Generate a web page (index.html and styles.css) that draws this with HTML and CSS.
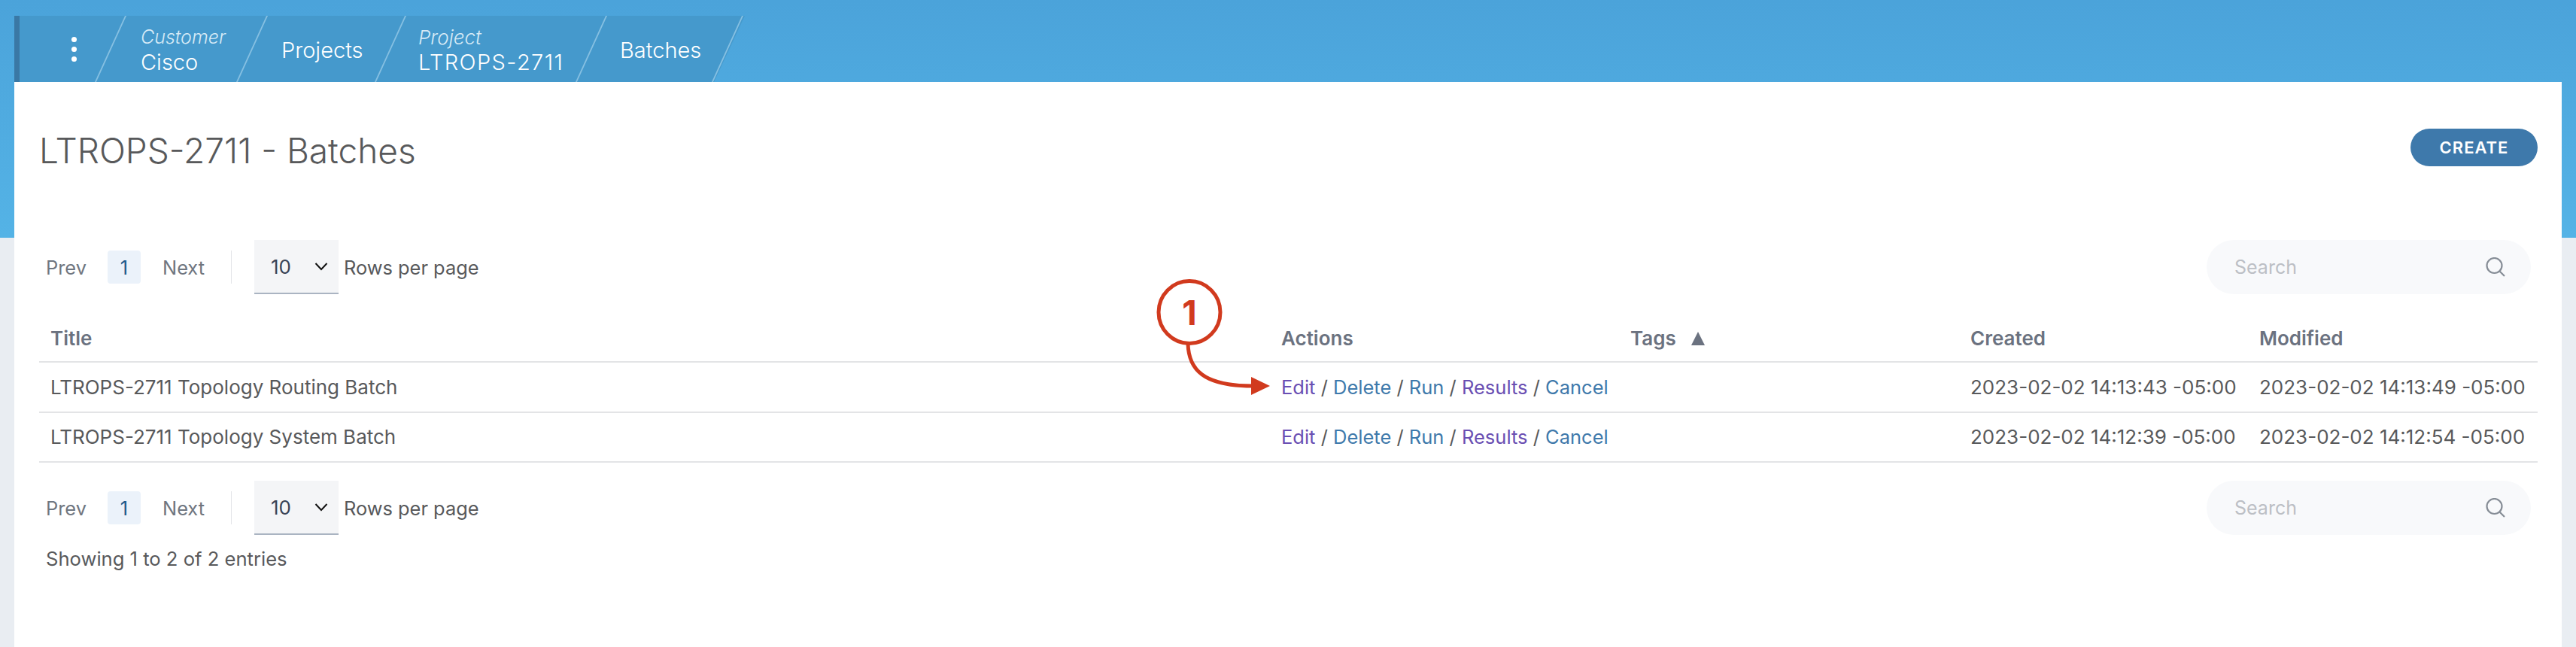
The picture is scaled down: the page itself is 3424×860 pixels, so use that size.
FILE: index.html
```html
<!DOCTYPE html>
<html lang="en">
<head>
<meta charset="utf-8">
<title>LTROPS-2711 - Batches</title>
<link rel="stylesheet" href="styles.css">
</head>
<body>
<div class="app">
  <nav class="crumbs">
    <div class="crumb crumb-menu"><span class="dot"></span><span class="dot"></span><span class="dot"></span></div>
    <div class="crumb crumb-customer"><span class="crumb-label">Customer</span><span class="crumb-name">Cisco</span></div>
    <div class="crumb crumb-projects"><span class="crumb-name">Projects</span></div>
    <div class="crumb crumb-project"><span class="crumb-label">Project</span><span class="crumb-name crumb-code">LTROPS-2711</span></div>
    <div class="crumb crumb-batches"><span class="crumb-name">Batches</span></div>
  </nav>
  <main class="panel">
    <header class="head">
      <h1 class="title">LTROPS-2711 - Batches</h1>
      <button class="create">CREATE</button>
    </header>
    <div class="pager">
      <div class="pager-left">
        <span class="page-link">Prev</span>
        <span class="page-num">1</span>
        <span class="page-link page-next">Next</span>
        <span class="page-divider"></span>
        <div class="rows-select"><span>10</span><svg class="chev" viewBox="0 0 18 12"><path d="M1.5 2 L9 10 L16.5 2"/></svg></div>
        <span class="rows-label">Rows per page</span>
      </div>
      <div class="search"><span class="search-text">Search</span><svg class="search-icon" viewBox="0 0 26 26"><circle cx="11.5" cy="11" r="10"/><path d="M18.5 18.5 L25 25"/></svg></div>
    </div>
    <div class="table-wrap">
      <table class="grid">
        <thead>
          <tr>
            <th class="col-title">Title</th>
            <th class="col-actions">Actions</th>
            <th class="col-tags">Tags<span class="sort"></span></th>
            <th class="col-created">Created</th>
            <th class="col-modified">Modified</th>
          </tr>
        </thead>
        <tbody>
          <tr>
            <td>LTROPS-2711 Topology Routing Batch</td>
            <td class="actions"><a class="visited">Edit</a> / <a>Delete</a> / <a>Run</a> / <a class="visited">Results</a> / <a>Cancel</a></td>
            <td></td>
            <td>2023-02-02 14:13:43 -05:00</td>
            <td>2023-02-02 14:13:49 -05:00</td>
          </tr>
          <tr>
            <td>LTROPS-2711 Topology System Batch</td>
            <td class="actions"><a class="visited">Edit</a> / <a>Delete</a> / <a>Run</a> / <a class="visited">Results</a> / <a>Cancel</a></td>
            <td></td>
            <td>2023-02-02 14:12:39 -05:00</td>
            <td>2023-02-02 14:12:54 -05:00</td>
          </tr>
        </tbody>
      </table>
      <div class="callout">
        <svg class="callout-art" viewBox="0 0 160 160">
          <ellipse cx="46" cy="46" rx="41" ry="41.5"/>
          <path d="M44 88 C45 122 64 144 130 144"/>
          <polygon class="callout-head" points="128,132 153,144 128,156"/>
        </svg>
        <span class="callout-num">1</span>
      </div>
    </div>
    <div class="pager pager-bottom">
      <div class="pager-left">
        <span class="page-link">Prev</span>
        <span class="page-num">1</span>
        <span class="page-link page-next">Next</span>
        <span class="page-divider"></span>
        <div class="rows-select"><span>10</span><svg class="chev" viewBox="0 0 18 12"><path d="M1.5 2 L9 10 L16.5 2"/></svg></div>
        <span class="rows-label">Rows per page</span>
      </div>
      <div class="search"><span class="search-text">Search</span><svg class="search-icon" viewBox="0 0 26 26"><circle cx="11.5" cy="11" r="10"/><path d="M18.5 18.5 L25 25"/></svg></div>
    </div>
    <p class="showing">Showing 1 to 2 of 2 entries</p>
  </main>
</div>
</body>
</html>
```
FILE: styles.css
```css
* { box-sizing: border-box; }
html, body { margin: 0; height: 100%; }
body {
  font-family: Inter, "Liberation Sans", sans-serif;
  background: linear-gradient(#4ba3da, #54b3e6) top / 100% 316px no-repeat, #e9edf2;
  overflow: hidden;
}
.app {
  height: 860px;
  padding: 21px 19px 0;
  display: flex;
  flex-direction: column;
}
.crumbs {
  display: flex;
  width: 971px;
  height: 88px;
  background: #4599cc;
  border-left: 7px solid #3a78a5;
  clip-path: polygon(0 0, 100% 0, calc(100% - 41px) 100%, 0 100%);
  color: #fff;
}
.crumb {
  position: relative;
  flex: none;
  display: flex;
  flex-direction: column;
  justify-content: center;
  padding-top: 2px;
}
.crumb::after {
  content: "";
  position: absolute;
  top: 0;
  bottom: 0;
  right: 0;
  width: 2px;
  background: #86c0e2;
  transform: skewX(-24.5deg);
}
.crumb-menu { width: 122px; align-items: center; gap: 6px; padding: 0 0 0 22px; }
.crumb-customer { width: 188px; padding-left: 39px; }
.crumb-projects { width: 184px; padding-left: 38px; }
.crumb-project { width: 267px; padding-left: 36px; }
.crumb-batches { width: 181px; padding-left: 37px; }
.dot { width: 7px; height: 7px; border-radius: 50%; background: #fff; }
.crumb-label { font-size: 25px; font-style: italic; font-weight: 300; line-height: 33px; color: #d6eaf6; }
.crumb-project .crumb-label { font-size: 26px; }
.crumb-name { font-size: 29px; font-weight: 300; line-height: 33px; white-space: nowrap; }
.crumb-code { letter-spacing: 1.4px; }
.panel {
  flex: 1;
  background: #fff;
  padding: 0 32px 0 33px;
}
.head {
  display: flex;
  justify-content: space-between;
  align-items: center;
  height: 50px;
  margin-top: 62px;
}
.title {
  margin: 8px 0 0;
  font-size: 46px;
  font-weight: 300;
  color: #58595b;
}
.create {
  width: 169px;
  height: 50px;
  border: 0;
  border-radius: 25px;
  background: #3e79ab;
  color: #fff;
  font: 600 22px Inter, sans-serif;
  letter-spacing: 1px;
}
.pager {
  display: flex;
  justify-content: space-between;
  align-items: center;
  height: 72px;
  margin-top: 98px;
  padding: 0 9px;
}
.pager-bottom { margin-top: 24px; }
.pager-left { display: flex; align-items: center; font-size: 25.4px; color: #58595b; }
.page-link { color: #6f7680; width: 82px; }
.page-next { width: 91px; }
.page-num {
  width: 44px;
  height: 44px;
  margin-right: 29px;
  border-radius: 4px;
  background: #ebf2fa;
  color: #1f5a8c;
  display: flex;
  align-items: center;
  justify-content: center;
}
.page-divider { width: 1px; height: 44px; background: #e3e5e8; margin-right: 30px; }
.rows-select {
  width: 112px;
  height: 72px;
  padding: 0 14px 0 22px;
  display: flex;
  align-items: center;
  justify-content: space-between;
  background: #f4f5f7;
  border-bottom: 2px solid #aab4c2;
  color: #3a4456;
  font-size: 26px;
}
.chev { width: 18px; height: 12px; fill: none; stroke: #111; stroke-width: 2; }
.rows-label { margin-left: 7px; }
.search {
  width: 431px;
  height: 72px;
  border-radius: 36px;
  padding: 0 34px 0 37px;
  display: flex;
  align-items: center;
  justify-content: space-between;
  background: #f8f9fb;
}
.search-text { font-size: 25px; color: #bcbfc5; }
.search-icon { width: 26px; height: 26px; fill: none; stroke: #868d96; stroke-width: 2.2; }
.table-wrap { position: relative; }
.grid { width: 100%; border-collapse: collapse; table-layout: fixed; font-size: 26px; color: #58595b; }
.grid th {
  height: 90px;
  padding: 0 15px 15px;
  text-align: left;
  vertical-align: bottom;
  font-weight: 600;
  color: #6b7280;
  border-bottom: 2px solid #e3e4e6;
}
.grid td {
  height: 66.5px;
  padding: 0 15px;
  white-space: nowrap;
  border-bottom: 2px solid #e3e4e6;
}
.grid td.actions { font-size: 25.5px; }
.col-title { width: 1636px; }
.col-actions { width: 464px; }
.col-tags { width: 452px; }
.col-created { width: 384px; }
.sort {
  display: inline-block;
  margin-left: 20px;
  border-left: 9px solid transparent;
  border-right: 9px solid transparent;
  border-bottom: 18px solid #6b7280;
}
.actions a { color: #3e79ab; }
.actions a.visited { color: #6a4fb3; }
.callout { position: absolute; left: 1483px; top: -22px; width: 160px; height: 160px; color: #d13a1e; }
.callout-art { width: 160px; height: 160px; fill: none; stroke: #d13a1e; stroke-width: 5; overflow: visible; }
.callout-head { fill: #d13a1e; stroke: none; }
.callout-num {
  position: absolute;
  left: 46px;
  top: 46px;
  transform: translate(-50%, -50%);
  font-size: 45px;
  font-weight: 700;
  line-height: 1;
}
.showing { margin: 16px 0 0 9px; font-size: 25.6px; color: #58595b; }
```
